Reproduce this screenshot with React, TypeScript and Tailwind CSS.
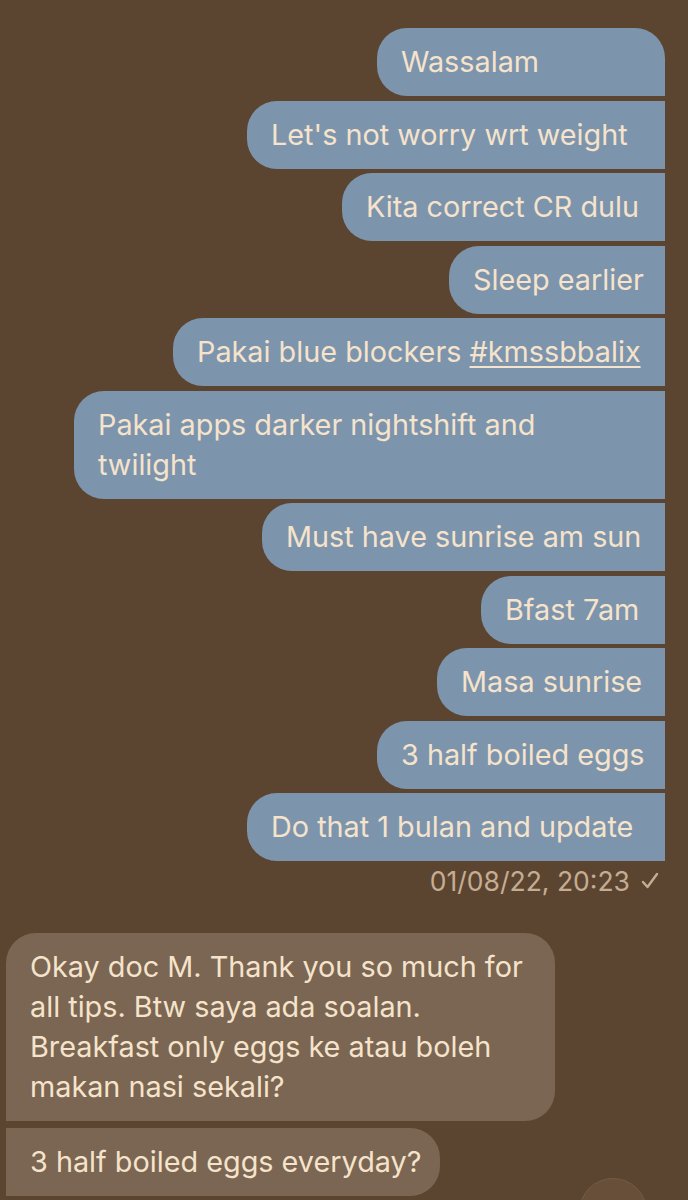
const outgoing: { text: React.ReactNode; w: string }[] = [
  { text: "Wassalam", w: "w-[288px]" },
  { text: "Let's not worry wrt weight", w: "w-[418px]" },
  { text: "Kita correct CR dulu", w: "w-[323px]" },
  { text: "Sleep earlier", w: "w-[216px]" },
  {
    text: (
      <>
        Pakai blue blockers <span className="underline underline-offset-4 decoration-2">#kmssbbalix</span>
      </>
    ),
    w: "w-[492px]",
  },
  {
    text: (
      <>
        Pakai apps darker nightshift and
        <br />
        twilight
      </>
    ),
    w: "w-[591px]",
  },
  { text: "Must have sunrise am sun", w: "w-[403px]" },
  { text: "Bfast 7am", w: "w-[184px]" },
  { text: "Masa sunrise", w: "w-[228px]" },
  { text: "3 half boiled eggs", w: "w-[288px]" },
  { text: "Do that 1 bulan and update", w: "w-[418px]" },
];

export default function App() {
  return (
    <div
      className="relative h-[1200px] w-[688px] overflow-hidden bg-[#5c4530] text-[#f5e3cb]"
      style={{ fontFamily: "Inter, 'Noto Sans', sans-serif" }}
    >
      <div className="flex flex-col items-end gap-[4.5px] pt-[28px] pr-[23px]">
        {outgoing.map((m, i) => (
          <div
            key={i}
            className={`${m.w} bg-[#7d94ad] py-[14px] pl-[24px] text-[28.8px] leading-[40px] whitespace-nowrap rounded-l-[30px] ${
              i === 0 ? "rounded-tr-[30px]" : ""
            }`}
          >
            {m.text}
          </div>
        ))}
      </div>

      <div className="flex items-center justify-end gap-[10px] pt-[4px] pr-[28px] text-[26.5px] leading-[32px] text-[#c5ad93]">
        <span>01/08/22, 20:23</span>
        <svg width="20" height="20" viewBox="0 0 20 20" fill="none">
          <path d="M3 11l4.5 5L17 3" stroke="#c5ad93" strokeWidth="2.4" strokeLinecap="round" strokeLinejoin="round" />
        </svg>
      </div>

      <div className="flex flex-col items-start gap-[7px] pt-[36px] pl-[6px]">
        <div className="w-[549px] bg-[#7a6652] py-[14px] pl-[24px] text-[28.8px] leading-[40px] whitespace-nowrap rounded-tl-[30px] rounded-r-[30px]">
          Okay doc M. Thank you so much for
          <br />
          all tips. Btw saya ada soalan.
          <br />
          Breakfast only eggs ke atau boleh
          <br />
          makan nasi sekali?
        </div>
        <div className="w-[434px] bg-[#7a6652] py-[14px] pl-[24px] text-[28.8px] leading-[40px] whitespace-nowrap rounded-r-[30px]">
          3 half boiled eggs everyday?
        </div>
      </div>

      <div className="absolute left-[579px] top-[1178px] h-[68px] w-[68px] rounded-full border border-[#735c46] bg-[#684f3a]" />
    </div>
  );
}
